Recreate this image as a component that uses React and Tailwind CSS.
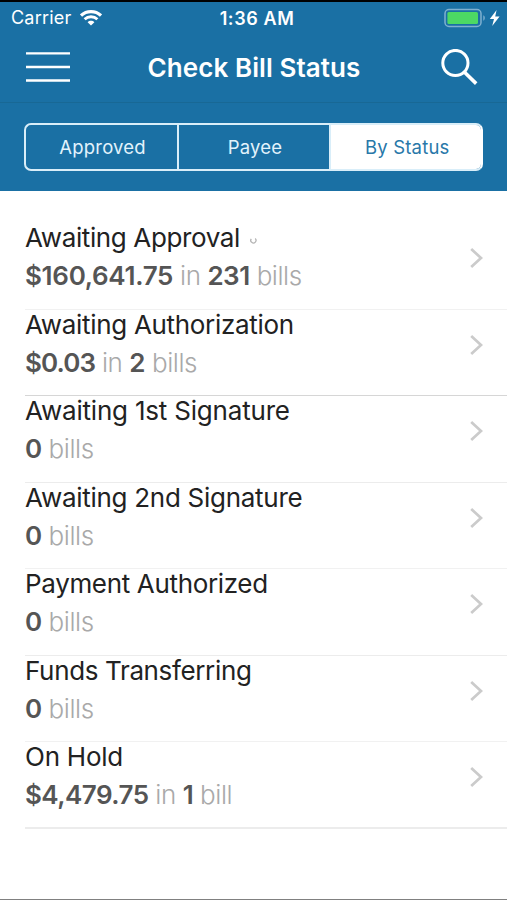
import React, { useState } from 'react';

const tabs = ['Approved', 'Payee', 'By Status'];

const statuses = [
  {
    title: 'Awaiting Approval',
    amount: '$160,641.75',
    count: 231,
    loading: true,
    line: 'border-[#f1f1f1]',
    titleTracking: 'tracking-[-0.38px]',
    amountTracking: 'tracking-[-0.3px]',
  },
  {
    title: 'Awaiting Authorization',
    amount: '$0.03',
    count: 2,
    line: 'border-[#d6d6d6]',
    titleTracking: 'tracking-[-0.32px]',
    amountTracking: 'tracking-[-0.9px]',
  },
  { title: 'Awaiting 1st Signature', count: 0, line: 'border-[#ececec]', titleTracking: 'tracking-[-0.2px]' },
  { title: 'Awaiting 2nd Signature', count: 0, line: 'border-[#f1f1f1]', titleTracking: 'tracking-[-0.28px]' },
  { title: 'Payment Authorized', count: 0, line: 'border-[#ececec]', titleTracking: 'tracking-[-0.34px]' },
  { title: 'Funds Transferring', count: 0, line: 'border-[#f1f1f1]', titleTracking: 'tracking-[-0.36px]' },
  {
    title: 'On Hold',
    amount: '$4,479.75',
    count: 1,
    line: 'border-[#ececec]',
    titleTracking: 'tracking-[-0.25px]',
    amountTracking: 'tracking-[-0.55px]',
  },
];

function WifiIcon() {
  return (
    <svg className="ml-[9px] h-4 w-[22px]" viewBox="0 0 22 16" fill="none">
      <path d="M1 5.6C6.6 0.4 15.4 0.4 21 5.6" stroke="white" strokeWidth="3.2" />
      <path d="M4.6 9.3C8.2 5.9 13.8 5.9 17.4 9.3" stroke="white" strokeWidth="2.9" />
      <path d="M7.6 12.2C9.5 10.4 12.5 10.4 14.4 12.2L11 15.6Z" fill="white" />
    </svg>
  );
}

function StatusBar() {
  return (
    <div className="grid h-[32px] grid-cols-3 items-center text-white">
      <div className="flex items-center pl-[11px]">
        <span className="text-[18px] leading-none tracking-[0.2px]">Carrier</span>
        <WifiIcon />
      </div>
      <span className="whitespace-nowrap pl-[7px] pt-px text-center text-[18px] font-semibold leading-none tracking-[0.6px]">
        1:36 AM
      </span>
      <div className="flex items-center justify-end pr-[7px]">
        <svg className="h-5 w-[56px]" viewBox="0 0 56 20" fill="none">
          <rect x="1" y="1.5" width="36" height="17" rx="4" stroke="#7fb0d0" strokeWidth="1.5" />
          <rect x="3.4" y="4" width="30.6" height="12" rx="1.5" fill="#4cd964" />
          <path d="M39.3 7.3C41.3 8 41.3 12 39.3 12.7Z" fill="#7fb0d0" />
          <path d="M52.6 2L45.8 11H50L48.2 18L55.6 8.4H51.2Z" fill="white" />
        </svg>
      </div>
    </div>
  );
}

function NavBar() {
  return (
    <div className="flex h-[69px] items-center justify-between border-b border-[#186895] pl-[26px] pr-[29px] text-white">
      <button aria-label="Menu" className="mb-[2px]">
        <svg className="h-8 w-11" viewBox="0 0 44 32" stroke="white" strokeWidth="2.4">
          <path d="M0 2.4H44M0 16H44M0 29.5H44" />
        </svg>
      </button>
      <h1 className="-ml-[3px] whitespace-nowrap text-[26px] font-semibold leading-none tracking-[0.07px]">
        Check Bill Status
      </h1>
      <button aria-label="Search" className="mb-[2px]">
        <svg className="h-[37px] w-[37px]" viewBox="0 0 37 37" fill="none" stroke="white" strokeWidth="3">
          <circle cx="14.4" cy="14" r="12.6" />
          <path d="M23.3 23L35.2 34.6" strokeWidth="3.6" />
        </svg>
      </button>
    </div>
  );
}

function Chevron() {
  return (
    <svg className="mb-[15px] mr-6 h-5 w-[13px]" viewBox="0 0 13 20" fill="none">
      <path d="M1.2 1L11 10L1.2 19" stroke="#cbcbcb" strokeWidth="2.7" />
    </svg>
  );
}

function StatusRow({ status }) {
  return (
    <li className={`flex h-[86.5px] items-center justify-between border-b last:border-b-2 ${status.line}`}>
      <div className="mb-[17.5px] flex flex-col text-[26px]">
        <div className="flex items-center">
          <span className={`leading-[38px] text-[#222] ${status.titleTracking}`}>{status.title}</span>
          {status.loading && (
            <svg className="ml-[10px] mt-1 h-[7px] w-[7px]" viewBox="0 0 7 7" fill="none" stroke="#b5b5b5" strokeWidth="1.3">
              <path d="M1.3 1.8A2.6 2.6 0 1 0 5.2 1.5" />
            </svg>
          )}
        </div>
        <p className="font-light leading-[38px] tracking-[-0.45px] text-[#a9a9a9]">
          {status.amount && (
            <>
              <b className={`font-semibold text-[#555] ${status.amountTracking}`}>{status.amount}</b> in{' '}
            </>
          )}
          <b className="font-semibold text-[#555]">{status.count}</b> {status.count === 1 ? 'bill' : 'bills'}
        </p>
      </div>
      <Chevron />
    </li>
  );
}

export default function App() {
  const [active, setActive] = useState('By Status');

  return (
    <div className="h-[900px] w-[507px] overflow-hidden border-b border-t-2 border-b-[#808080] border-t-black bg-white font-['Inter',sans-serif]">
      <header className="h-[189px] bg-[#1a70a4]">
        <StatusBar />
        <NavBar />
        <div className="pl-[24.4px] pr-[23.6px] pt-5">
          <div
            className={`flex h-12 overflow-hidden rounded-[7px] border-2 border-[#d9eef9] ${
              active === 'By Status' ? 'border-r-white' : ''
            }`}
          >
            {tabs.map((tab) => (
              <button
                key={tab}
                onClick={() => setActive(tab)}
                className={`flex-1 border-r-2 border-[#d9eef9] pl-[2px] pt-[2px] text-[18.5px] tracking-[0.2px] last:border-r-0 ${
                  tab === active ? 'bg-white text-[#2878a9]' : 'text-[#e2f3fc]'
                }`}
              >
                {tab}
              </button>
            ))}
          </div>
        </div>
      </header>
      <ul className="pl-[25px] pt-[32px]">
        {statuses.map((status) => (
          <StatusRow key={status.title} status={status} />
        ))}
      </ul>
    </div>
  );
}
